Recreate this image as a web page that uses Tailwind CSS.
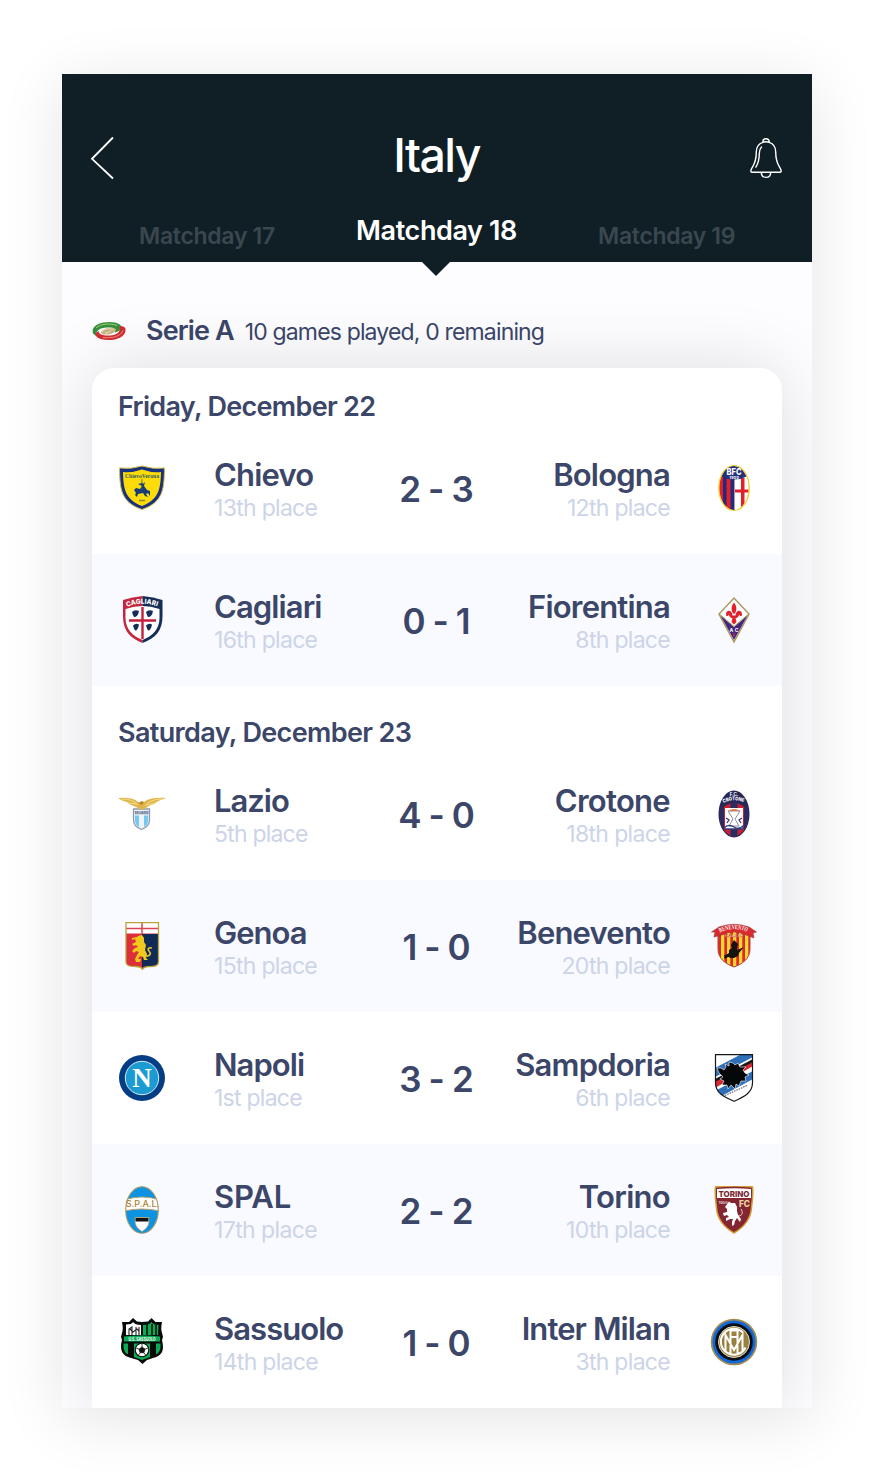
<!DOCTYPE html>
<html lang="en">
<head>
<meta charset="utf-8">
<title>Italy - Matchday 18</title>
<script src="https://cdn.jsdelivr.net/npm/@tailwindcss/browser@4"></script>
</head>
<body class="h-[1478px] overflow-hidden bg-white px-[62px] pt-[74px] pr-[58px] pb-[70px] font-['Inter',sans-serif] text-[#3b4669] antialiased">
<main class="flex h-[1334px] w-[750px] flex-col bg-[#fdfdff] shadow-[0_10px_60px_rgba(0,0,0,0.11)]">
  <header class="relative z-10 h-[188px] shrink-0 bg-[#101f26] pt-[56px] text-white">
    <div class="flex h-[56px] items-center justify-between px-7">
      <svg class="h-14 w-8" viewBox="0 0 32 56" fill="none" stroke="#fff" stroke-width="1.800"><path d="M23 7.500 2 28.800 23 48.500"/></svg>
      <h1 class="-mt-[6px] ml-[3px] text-[46.5px] leading-[56px] font-medium tracking-[-1.6px]">Italy</h1>
      <svg class="h-14 w-9" viewBox="0 0 36 56" fill="none" stroke="#fff" stroke-width="1.400" stroke-linecap="round"><path d="M14.800 12c0-2.200 1.100-3.300 3.200-3.300s3.200 1.100 3.200 3.300M14.800 12.400c2-.9 4.400-.9 6.400 0 4 1.300 6.500 4.700 6.500 9.600 0 8 1.300 11.200 4 15.300 1.200 1.900 2.400 4.700.3 4.900H4c-2.100-.2-.9-3 .3-4.900 2.700-4.100 4-7.300 4-15.300 0-4.900 2.500-8.300 6.500-9.600ZM13.300 42.400c.2 6.600 9.200 6.600 9.400 0M13.500 17c-1.700 1.700-2.200 3.500-2.200 6.400 0 6.200-1.100 9.800-3.400 13.700"/></svg>
    </div>
    <nav class="grid h-[76px] grid-cols-3 font-semibold">
      <span class="pt-[36px] pl-[77px] text-[23px] leading-[28px] tracking-[-0.3px] whitespace-nowrap text-[#3b474f]">Matchday 17</span>
      <span class="pt-[29px] pr-px text-center text-[27px] leading-[32px] tracking-[-0.4px] whitespace-nowrap">Matchday 18</span>
      <span class="pt-[36px] pr-[77px] text-right text-[23px] leading-[28px] tracking-[-0.35px] whitespace-nowrap text-[#3b474f]">Matchday 19</span>
    </nav>
    <svg class="absolute top-[188px] left-[360px] h-[14px] w-[28px]" viewBox="0 0 28 14"><path d="M0 0h28L14 14Z" fill="#101f26"/></svg>
  </header>
  <section class="flex min-h-0 flex-1 flex-col overflow-hidden px-[30px]">
    <div class="flex h-[106px] shrink-0 items-center pt-[31px]">
      <svg class="mr-5 h-5 w-[34px]" viewBox="0 0 34 20" fill="none"><ellipse cx="17" cy="10" rx="13" ry="6" fill="#fff"/><path d="M1 12.500C-2 3 13-.5 23 1.500c9 2 8 8 0 10 1-4-2-5.500-8-5-8 .5-11 3-11 8.500Z" fill="#35913c"/><path d="M33.500 8c1 9-13 13-25 10-6-2-6-6-2-8 0 3 4 4.500 9 4.500 8 0 14-3 12-9.500 4 0 5.500 1 6 3Z" fill="#d22e33"/><ellipse cx="16.500" cy="10.200" rx="7.500" ry="3.200" transform="rotate(-12 16 10)" fill="#c9b27c"/><path d="M10 11c3-4 9-4 12-2M13 12c3 0 5-1 6-2.500" stroke="#f5eedb" stroke-width=".8"/><path d="M4 7C9 2.500 18 2 25 4.500" stroke="#a5d07f"/><path d="M11 16.500c9 1 18-1 20-7" stroke="#ef8f82"/></svg>
      <span class="text-[27px] leading-8 font-semibold tracking-[-0.9px]">Serie A</span>
      <span class="mt-[3px] ml-[11px] text-[23px] leading-7 tracking-[-0.84px]">10 games played, 0 remaining</span>
    </div>
    <div class="shrink-0 rounded-t-[22px] bg-white shadow-[0_0_70px_rgba(0,0,0,0.13)]">
      <h2 class="h-[54px] pt-[23px] pl-[26px] text-[27px] leading-8 font-semibold tracking-[-0.68px]">Friday, December 22</h2>

      <article class="flex h-[132px] pr-6 pl-[26px]">
        <svg class="mt-[42px] size-12 shrink-0" viewBox="0 0 48 48"><path d="M1.500 4Q13 5.500 24 2 35 5.500 46.500 4C46 24 46 38 24 45.500 2 38 2 24 1.500 4Z" fill="#18307f" stroke="#d2bd43"/><path d="M5 8Q14 9 24 5.500 34 9 43 8C42.500 24 41.500 35 24 42 6.500 35 5.500 24 5 8Z" fill="#fbdc09"/><text x="24" y="14" font-family="Liberation Serif" font-size="5.600" font-weight="700" fill="#345d61" text-anchor="middle">ChievoVerona</text><path d="m23 17 2 3 2-2-1 4 3 4 3 1v5l-2-3-2 1 2 3-3-1-2-3-5 1-1 3-2-2 1-2-2-3 2-2 4 1 2-3-4-2 4-1Z" fill="#173b78"/><path d="M24 15v11" stroke="#315b79" stroke-width=".8"/><path d="M21 36.500h6" stroke="#8e8539" stroke-width="1.500"/></svg>
        <div class="w-[170px] pt-[36px] pl-12"><p class="text-[31px] leading-[33px] font-semibold tracking-[-0.8px] whitespace-nowrap">Chievo</p><p class="mt-px text-[23px] leading-8 tracking-[-0.7px] whitespace-nowrap text-[#ccd4e8]">13th place</p></div>
        <p class="-mx-4 mt-[47px] flex-1 pr-[3px] text-center text-[35px] leading-10 font-semibold whitespace-nowrap [font-feature-settings:'calt'_0] [word-spacing:-1.800px]">2 - 3</p>
        <div class="flex w-[170px] flex-col items-end pt-[36px] pr-10"><p class="text-[31px] leading-[33px] font-semibold tracking-[-0.8px] whitespace-nowrap">Bologna</p><p class="mt-px text-[23px] leading-8 tracking-[-0.7px] whitespace-nowrap text-[#ccd4e8]">12th place</p></div>
        <svg class="mt-[42px] size-12 shrink-0" viewBox="0 0 48 48"><defs><clipPath id="bo"><ellipse cx="24" cy="24" rx="14.800" ry="22"/></clipPath></defs><g clip-path="url(#bo)"><path d="M8 0h17v48H8z" fill="#e2202b"/><path d="M13 0h3.500v48H13zM20.500 0h4v48h-4z" fill="#1f2b7d"/><path d="M24.500 14H40v34H24.500z" fill="#fff"/><path d="M31 14h3.500v34H31zM25 25.500h15v3H25z" fill="#e2202b"/><path d="M10 0h28v12q-14 7-28 0Z" fill="#22307d"/></g><ellipse cx="24" cy="24" rx="15.200" ry="22.500" fill="none" stroke="#ecce1c" stroke-width="1.200"/><text x="24" y="10.500" font-family="Inter" font-weight="800" font-size="9" text-anchor="middle" textLength="15" lengthAdjust="spacingAndGlyphs" fill="#fff">BFC</text><text x="24" y="14.500" font-family="Inter" font-weight="700" font-size="4" text-anchor="middle" fill="#fff">1909</text></svg>
      </article>

      <article class="flex h-[132px] bg-[#f9faff] pr-6 pl-[26px]">
        <svg class="mt-[42px] size-12 shrink-0" viewBox="0 0 48 48"><path d="M5 4Q15 1 24.500 0v47C12 42 5 35 5 20Z" fill="#c4253d"/><path d="M24.500 0Q35 1 44.500 4v16c0 15-7 22-20 27Z" fill="#142d59"/><path d="M7.500 13q17-6 34 0v9c0 11-7 18-17 22-10-4-17-11-17-22Z" fill="#fff"/><path d="M24.500 11v32M11 24.500h27" stroke="#c3203d" stroke-width="2.400"/><path d="M14 16q3-3 7-1-1 6-5 6l-1-2-1-3ZM28 16q3-3 7-1-1 6-5 6l-1-2-1-3ZM15 29.500q3-3 6-1-1 6-4 6l-1-2-1-3ZM28 29.500q3-3 6-1-1 6-4 6l-1-2-1-3Z" fill="#142d59"/><path id="cg" d="M9 11Q24 4.500 41 11" fill="none"/><text font-family="Inter" font-size="6.800" font-weight="800" fill="#fff" textLength="31" lengthAdjust="spacingAndGlyphs"><textPath href="#cg">CAGLIARI</textPath></text></svg>
        <div class="w-[170px] pt-[36px] pl-12"><p class="text-[31px] leading-[33px] font-semibold tracking-[-0.9px] whitespace-nowrap">Cagliari</p><p class="mt-px text-[23px] leading-8 tracking-[-0.7px] whitespace-nowrap text-[#ccd4e8]">16th place</p></div>
        <p class="-mx-4 mt-[47px] flex-1 pr-[3px] text-center text-[35px] leading-10 font-semibold whitespace-nowrap [font-feature-settings:'calt'_0] [word-spacing:-1.800px]">0 - 1</p>
        <div class="flex w-[170px] flex-col items-end pt-[36px] pr-10"><p class="text-[31px] leading-[33px] font-semibold tracking-[-0.8px] whitespace-nowrap">Fiorentina</p><p class="mt-px text-[23px] leading-8 tracking-[-0.7px] whitespace-nowrap text-[#ccd4e8]">8th place</p></div>
        <svg class="mt-[42px] size-12 shrink-0" viewBox="0 0 48 48"><path d="M24 2 39 18 24 46 9 18Z" fill="#fff" stroke="#aa995c" stroke-width="1.500"/><path d="M10.500 19.500 24 31 37.500 19.500 24 44Z" fill="#43277d"/><path d="m10 18.500 14 12 14-12" fill="none" stroke="#aa995c"/><path d="M24 6.500c-3 4-3 7-1 11h2c2-4 2-7-1-11ZM22.500 19.500c-.5-6-6.500-6-6.500-1 0 2 2.500 2 2.500 0 1 1 1 3.500 4 3.500l-1 4 2.500 2.500 2.500-2.500-1-4c3 0 3-2.500 4-3.500 0 2 2.500 2 2.500 0 0-5-6-5-6.500 1Z" fill="#e4212b"/><text x="24" y="35.500" font-family="Inter" font-size="5" font-weight="700" text-anchor="middle" fill="#fff" textLength="9">AC</text><text x="24" y="40.500" font-family="Inter" font-size="4.500" font-weight="700" text-anchor="middle" fill="#e4214b">F</text></svg>
      </article>

      <h2 class="h-[62px] pt-[31px] pl-[26px] text-[27px] leading-8 font-semibold tracking-[-0.64px]">Saturday, December 23</h2>

      <article class="flex h-[132px] pr-6 pl-[26px]">
        <svg class="mt-[42px] size-12 shrink-0" viewBox="0 0 48 48"><path d="M15.500 19h16v11c0 6-4 8-8 9.500-4-1.500-8-3.500-8-9.500Z" fill="#eef3f9" stroke="#8f9bb3" stroke-width="1.300"/><path d="M17 25.500h4V37c-3-2-4-4-4-7ZM26 25.500h4V30c0 3-1 5-4 7Z" fill="#75c8ee"/><path d="M17 21h13v3.500H17z" fill="#b9c2d4"/><text x="23.500" y="24" font-family="Inter" font-size="3" font-weight="700" text-anchor="middle" fill="#566583">SS.LAZIO</text><path d="M0 8q15-1 20 4l3 2 3-2Q32 7 48 8q-9 3-12 6-6 2-8 4l-5 2-5-3-5-2-4-3Q4 11 0 8Z" fill="#dfb64e"/><path d="M4 9q11 0 16 6M44 9q-12 0-17 7M10 13l9 1M38 13l-9 2" fill="none" stroke="#f5dc88"/><path d="m20 13 4-2 2 1-2 3Z" fill="#bc8430"/></svg>
        <div class="w-[170px] pt-[36px] pl-12"><p class="text-[31px] leading-[33px] font-semibold tracking-[-1px] whitespace-nowrap">Lazio</p><p class="mt-px text-[23px] leading-8 tracking-[-0.8px] whitespace-nowrap text-[#ccd4e8]">5th place</p></div>
        <p class="-mx-4 mt-[47px] flex-1 pr-[3px] text-center text-[35px] leading-10 font-semibold whitespace-nowrap [font-feature-settings:'calt'_0] [word-spacing:-1.800px]">4 - 0</p>
        <div class="flex w-[170px] flex-col items-end pt-[36px] pr-10"><p class="text-[31px] leading-[33px] font-semibold tracking-[-0.7px] whitespace-nowrap">Crotone</p><p class="mt-px text-[23px] leading-8 tracking-[-0.65px] whitespace-nowrap text-[#ccd4e8]">18th place</p></div>
        <svg class="mt-[42px] size-12 shrink-0" viewBox="0 0 48 48"><defs><clipPath id="cr"><path d="M10 20Q24 6 38 20v9c-1 9-6 16-14 18-8-2-13-9-14-18Z"/></clipPath></defs><ellipse cx="24" cy="24" rx="15.500" ry="23.500" fill="#252858"/><g clip-path="url(#cr)"><path d="M9 8h31v40H9z" fill="#c7202e"/><path d="M9 10h5v38H9zM20.500 8h7v40h-7zM34 8h6v40h-6z" fill="#282c61"/></g><path d="M15 18h18v21H15z" fill="#fff"/><path d="M18 21h12l-5 8 4 7H19l4-7Z" fill="none" stroke="#8a90a2"/><path d="M18 21q6-4 12 0Z" fill="#e5754c"/><path d="M15 37q4-3 9 0t9-1v3H15ZM16 28l3 2-2 3M32 28l-3 2 2 3" fill="none" stroke="#353d78" stroke-width="1.300"/><text x="24" y="6.300" font-family="Inter" font-size="4.500" font-weight="700" text-anchor="middle" fill="#fff">F.C.</text><path id="ct" d="M13.500 13Q24 7.500 35.500 13" fill="none"/><text font-family="Inter" font-size="5" font-weight="800" fill="#fff" textLength="21" lengthAdjust="spacingAndGlyphs"><textPath href="#ct">CROTONE</textPath></text></svg>
      </article>

      <article class="flex h-[132px] bg-[#f9faff] pr-6 pl-[26px]">
        <svg class="mt-[42px] size-12 shrink-0" viewBox="0 0 48 48"><path d="M8 .7h32.500v39c0 4-3 5-10 5-3 0-5 1-6.300 2.500C23 45 20 44.500 18 44.500c-7 0-10-1-10-5Z" fill="#db303a"/><path d="M24 12h16v28c0 4-5 4-10 4-3 0-5 1-6 2Z" fill="#122b56"/><path d="M8 1h32v10.500H8z" fill="#fff"/><path d="M24 1v11M8 6.500h32" stroke="#db4451" stroke-width="1.500"/><path d="M8 .7h32.500v39c0 4-3 5-10 5-3 0-5 1-6.300 2.500C23 45 20 44.500 18 44.500c-7 0-10-1-10-5Z" fill="none" stroke="#b7a438" stroke-width="1.300"/><path d="m20 14 4-1 2 3v4l2 3-1 5 2 4-1 4 2 2h-4l-1-3-3-1-2 3h3l-1 3h-4l-1-3 2-4 2-3-3-1-2 2-2-2 3-3 3-1-2-2-2 1-2-2 4-2-1-3-3 1v-2l5-1Z" fill="#f1c91c"/><path d="M28 34c5 0 5-3 3-5s0-4 3-3" fill="none" stroke="#e4c334" stroke-width="1.600"/></svg>
        <div class="w-[170px] pt-[36px] pl-12"><p class="text-[31px] leading-[33px] font-semibold tracking-[-1px] whitespace-nowrap">Genoa</p><p class="mt-px text-[23px] leading-8 tracking-[-0.7px] whitespace-nowrap text-[#ccd4e8]">15th place</p></div>
        <p class="-mx-4 mt-[47px] flex-1 pr-[3px] text-center text-[35px] leading-10 font-semibold whitespace-nowrap [font-feature-settings:'calt'_0] [word-spacing:-1.800px]">1 - 0</p>
        <div class="flex w-[170px] flex-col items-end pt-[36px] pr-10"><p class="text-[31px] leading-[33px] font-semibold tracking-[-0.8px] whitespace-nowrap">Benevento</p><p class="mt-px text-[23px] leading-8 tracking-[-0.7px] whitespace-nowrap text-[#ccd4e8]">20th place</p></div>
        <svg class="mt-[42px] size-12 shrink-0" viewBox="0 0 48 48"><defs><clipPath id="be"><path d="M8 6q16-7 32 0v21c0 10-8 15-16 18C16 42 8 37 8 27Z"/></clipPath></defs><g clip-path="url(#be)"><path d="M7 0h34v48H7z" fill="#da2930"/><path d="M11 8h3.300v40H11zM17 8h3.300v40H17zM23 8h3.300v40H23zM29 8h3.300v40H29zM35 8h3.300v40H35z" fill="#f9d72c"/></g><path d="M8 12v15c0 10 8 15 16 18 8-3 16-8 16-18V12" fill="none" stroke="#b34832"/><path d="m1.500 10 7.500-5Q24-.5 39 5l7.500 5-3.500 1 1 5-8-3q-12-6-24 0l-8 2 1-5Z" fill="#d9292f" stroke="#9e3834" stroke-width=".6"/><path id="bn" d="M10 10.500Q24 3.500 39 10.500" fill="none"/><text font-family="Liberation Serif" font-size="6.500" font-weight="700" fill="#fff" textLength="28" lengthAdjust="spacingAndGlyphs"><textPath href="#bn">BENEVENTO</textPath></text><text x="24" y="14.500" font-family="Liberation Serif" font-size="4.500" font-weight="700" text-anchor="middle" fill="#fff" stroke="#b2262c" stroke-width=".25">CALCIO</text><path d="m24 18 2 2 2 2-1 4v3l6-3-4 5-1 3-4 2-3 0-3-1-3 2-1-2 3-2 2-2 0-3 3-2-1-3Z" fill="#17130f"/><path d="m14 34 19-8" stroke="#17130f"/></svg>
      </article>

      <article class="flex h-[132px] pr-6 pl-[26px]">
        <svg class="mt-[42px] size-12 shrink-0" viewBox="0 0 48 48"><circle cx="24" cy="24" r="23" fill="#053d84"/><circle cx="24" cy="24" r="16.700" fill="#1c9bd3" stroke="#d9edf7" stroke-width="1"/><text x="24" y="33" font-family="Liberation Serif" font-size="27" font-weight="700" text-anchor="middle" fill="#fff">N</text></svg>
        <div class="w-[170px] pt-[36px] pl-12"><p class="text-[31px] leading-[33px] font-semibold tracking-[-0.95px] whitespace-nowrap">Napoli</p><p class="mt-px text-[23px] leading-8 tracking-[-0.75px] whitespace-nowrap text-[#ccd4e8]">1st place</p></div>
        <p class="-mx-4 mt-[47px] flex-1 pr-[3px] text-center text-[35px] leading-10 font-semibold whitespace-nowrap [font-feature-settings:'calt'_0] [word-spacing:-1.800px]">3 - 2</p>
        <div class="flex w-[170px] flex-col items-end pt-[36px] pr-10"><p class="text-[31px] leading-[33px] font-semibold tracking-[-0.8px] whitespace-nowrap">Sampdoria</p><p class="mt-px text-[23px] leading-8 tracking-[-0.7px] whitespace-nowrap text-[#ccd4e8]">6th place</p></div>
        <svg class="mt-[42px] size-12 shrink-0" viewBox="0 0 48 48"><defs><clipPath id="sa"><path d="M5.500 0h37v29c0 10-9 14-18.500 18.500C14 43 5.500 39 5.500 29Z"/></clipPath></defs><g clip-path="url(#sa)"><path d="M5 0h38v48H5z" fill="#fff"/><path d="M5 14 43-6v9L5 23ZM5 37l38-20v8L8 44Z" fill="#2d6fb9"/><path d="m5 25 38-20v4L5 30Z" fill="#17191c"/><path d="m5 28 38-20v4L5 34Z" fill="#d52833"/></g><path d="m19 8 4 1 2 2 3-2 2 4 6 0-3 3 2 3 4 2-4 2 1 4-5 0-2 5-3-2-1 5-4-4-3 4-1-4-5 0 2-4-4-2 3-2-4-4-2-5 4 0 3 2 2-3-1-3 4 2Z" fill="#060708" stroke="#fff" stroke-width=".6"/><path d="m15 41.500 22-10" stroke="#557" stroke-width="1.100" stroke-dasharray="1.500 1"/><path d="M5.500.7h37V29c0 10-9 14-18.500 18.300C14 43 5.500 39 5.500 29Z" fill="none" stroke="#15171a" stroke-width="1.200"/></svg>
      </article>

      <article class="flex h-[132px] bg-[#f9faff] pr-6 pl-[26px]">
        <svg class="mt-[42px] size-12 shrink-0" viewBox="0 0 48 48"><defs><clipPath id="sp"><ellipse cx="24" cy="24" rx="16.300" ry="23.500"/></clipPath></defs><g clip-path="url(#sp)"><path d="M6 0h36v48H6z" fill="#0c94e2"/><path d="M6 14q18-6 36 0v11q-18-4-36 0Z" fill="#fff" stroke="#b4a076"/></g><ellipse cx="24" cy="24" rx="16.300" ry="23.300" fill="none" stroke="#b49b62" stroke-width="1.100"/><text x="24.500" y="21.300" font-family="Inter" font-size="9" font-weight="500" text-anchor="middle" fill="#a98230">S.P.A.L.</text><path d="M17 31.500h14V35c0 5-3 8-7 10.500-4-2.500-7-5.500-7-10.500Z" fill="#fff" stroke="#b49b62" stroke-width=".8"/><path d="M17.500 32h13v3.500h-13z" fill="#111"/></svg>
        <div class="w-[170px] pt-[36px] pl-12"><p class="text-[31px] leading-[33px] font-semibold tracking-[-0.2px] whitespace-nowrap">SPAL</p><p class="mt-px text-[23px] leading-8 tracking-[-0.6px] whitespace-nowrap text-[#ccd4e8]">17th place</p></div>
        <p class="-mx-4 mt-[47px] flex-1 pr-[3px] text-center text-[35px] leading-10 font-semibold whitespace-nowrap [font-feature-settings:'calt'_0] [word-spacing:-1.800px]">2 - 2</p>
        <div class="flex w-[170px] flex-col items-end pt-[36px] pr-10"><p class="text-[31px] leading-[33px] font-semibold tracking-[-0.7px] whitespace-nowrap">Torino</p><p class="mt-px text-[23px] leading-8 tracking-[-0.7px] whitespace-nowrap text-[#ccd4e8]">10th place</p></div>
        <svg class="mt-[42px] size-12 shrink-0" viewBox="0 0 48 48"><path d="M5.500 1q18.500-2 37 0c1 9-.5 14-1 21-1 13-9 20-17.500 25C15.500 42 7.500 35 6.500 22 6 15 4.500 10 5.500 1Z" fill="#842631" stroke="#d49b32" stroke-width="1.500"/><path d="M7 3q17-1.500 34 0v9H7Z" fill="#fff"/><text x="24" y="10.500" font-family="Inter" font-size="8" font-weight="800" text-anchor="middle" fill="#772431" textLength="31" lengthAdjust="spacingAndGlyphs">TORINO</text><text x="8.500" y="18" font-family="Inter" font-size="4" fill="#fff">1906</text><text x="29" y="21.300" font-family="Inter" font-size="8.500" font-weight="800" fill="#f0d7a2" textLength="11" lengthAdjust="spacingAndGlyphs">FC</text><path d="m19 15.500 2 1.500 4 0 2 4v4l1 4 3 4-1 3-3-4-2 3-1 4-2 1 0-4 1-3-3 0-4 2 0-3 3-1-2-2-3 1-1-3 4-1 0-3-2-2Z" fill="#fff"/><path d="M28 30c5 0 5-4 3-7" fill="none" stroke="#fff" stroke-width=".8"/></svg>
      </article>

      <article class="flex h-[132px] pr-6 pl-[26px]">
        <svg class="mt-[42px] size-12 shrink-0" viewBox="0 0 48 48"><path d="m4 4 7 0 4-4 4 3.500 5 .5 6-.5L33.500 0l4 4 6.500 0c-1 5-1 8 0 11l1 4-1 3c3 12-1 16-9 18l-6 2-4.500 4-4.500-4-7-2c-8-2-12-7-9-18l-1-3 1-4C5 12 5 9 4 4Z" fill="#060b09"/><path d="M8 6.500q6 0 7-2.500 2 3 8 3v10H8Z" fill="#fff"/><path d="M25 7q7 0 8.500-3 1.500 3 7 3l-.5 10H25Z" fill="#0baa55"/><path d="M29 6v12M34 6v12M38 6v12" stroke="#07110d" stroke-width="1.600"/><path d="M11 17v-6l3-2v8M18 9v8M21 9v8M12 11l3 3 4-3 2 2" fill="none" stroke="#222" stroke-width="1.100"/><path d="M6 18.500q18-2 36 0v5H6Z" fill="#0baa55"/><text x="24" y="22.800" font-family="Inter" font-size="4.500" font-weight="700" text-anchor="middle" fill="#fff" textLength="27" lengthAdjust="spacingAndGlyphs">U.S. SASSUOLO</text><path d="M5.500 25.500H10v11q-5-2-4.500-11ZM16 25.500h16V39l-8 3-8-3ZM38 25.500h4.500q.5 9-4.500 11Z" fill="#0baa55"/><circle cx="24" cy="32" r="7.300" fill="#0a0b0b"/><circle cx="24" cy="32" r="6.200" fill="#fff"/><path d="m24 29 3 2.200-1.100 3.500h-3.800L21 31.200ZM24 26v3M18 30l3 1.200M30 30l-3 1.200M22.100 34.700 20.500 37M25.900 34.700 27.500 37" fill="#111" stroke="#111" stroke-width=".8"/></svg>
        <div class="w-[170px] pt-[36px] pl-12"><p class="text-[31px] leading-[33px] font-semibold tracking-[-0.95px] whitespace-nowrap">Sassuolo</p><p class="mt-px text-[23px] leading-8 tracking-[-0.7px] whitespace-nowrap text-[#ccd4e8]">14th place</p></div>
        <p class="-mx-4 mt-[47px] flex-1 pr-[3px] text-center text-[35px] leading-10 font-semibold whitespace-nowrap [font-feature-settings:'calt'_0] [word-spacing:-1.800px]">1 - 0</p>
        <div class="flex w-[170px] flex-col items-end pt-[36px] pr-10"><p class="text-[31px] leading-[33px] font-semibold tracking-[-0.9px] whitespace-nowrap">Inter Milan</p><p class="mt-px text-[23px] leading-8 tracking-[-0.7px] whitespace-nowrap text-[#ccd4e8]">3th place</p></div>
        <svg class="mt-[42px] size-12 shrink-0" viewBox="0 0 48 48"><circle cx="24" cy="24" r="22.400" fill="#1268d8" stroke="#a18b50" stroke-width="1.700"/><circle cx="24" cy="24" r="18.800" fill="#090d16"/><circle cx="24" cy="24" r="15.500" fill="#99803f" stroke="#e4dcc5"/><g fill="none" stroke="#fff" stroke-width="2"><path d="M33 14.500a13 13 0 1 0 2.500 15M15.500 33V17l8.500 15 8.500-15v17M20.500 36V12.500h8.500M20.500 19h7M27.500 12.500V36"/></g></svg>
      </article>
    </div>
  </section>
</main>
</body>
</html>
